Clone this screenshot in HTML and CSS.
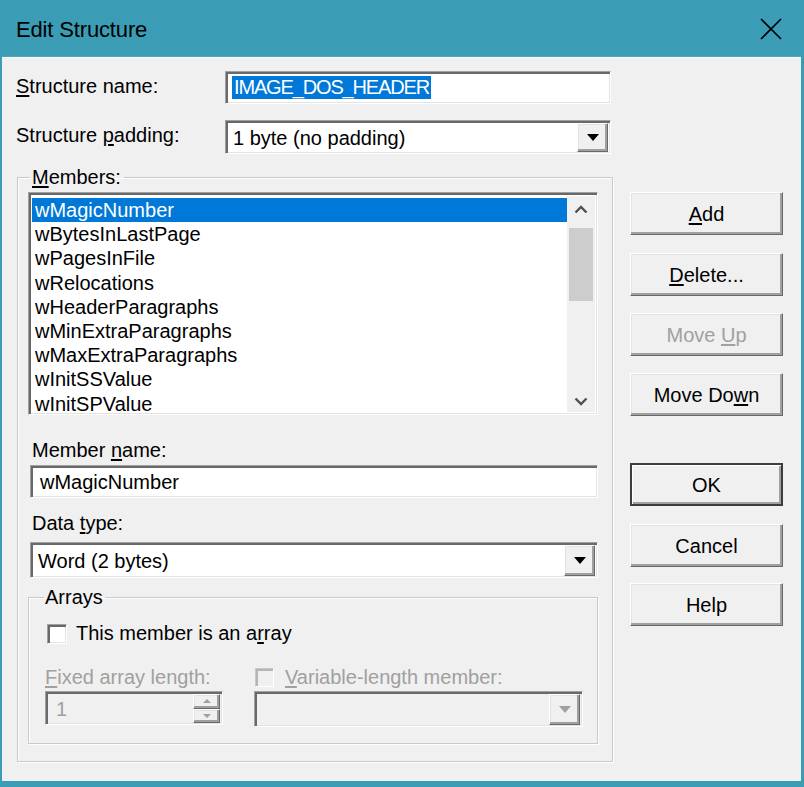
FILE: index.html
```html
<!DOCTYPE html>
<html>
<head>
<meta charset="utf-8">
<link rel="stylesheet" href="styles.css">
</head>
<body>
<div class="window">
  <div class="titlebar">
    <span class="title">Edit Structure</span>
    <svg class="close" width="22" height="22" viewBox="0 0 22 22"><path d="M1 1 L21 21 M21 1 L1 21" stroke="#000" stroke-width="1.6" fill="none"/></svg>
  </div>
  <div class="body">
    <div class="left">
      <div class="row r1">
        <span class="rowlabel"><u>S</u>tructure name:</span>
        <div class="edit sunken wide"><span class="seltext">IMAGE_DOS_HEADER</span></div>
      </div>
      <div class="row r2">
        <span class="rowlabel">Structure <u>p</u>adding:</span>
        <div class="combo sunken wide">
          <span class="combotext">1 byte (no padding)</span>
          <span class="dropbtn raised"><svg width="12" height="7" viewBox="0 0 12 7"><path d="M0 0 H12 L6 7 Z" fill="#000"/></svg></span>
        </div>
      </div>
      <fieldset class="group members">
        <legend class="legend"><u>M</u>embers:</legend>
        <div class="listbox sunken">
          <ul class="items">
            <li class="item selected">wMagicNumber</li>
            <li class="item">wBytesInLastPage</li>
            <li class="item">wPagesInFile</li>
            <li class="item">wRelocations</li>
            <li class="item">wHeaderParagraphs</li>
            <li class="item">wMinExtraParagraphs</li>
            <li class="item">wMaxExtraParagraphs</li>
            <li class="item">wInitSSValue</li>
            <li class="item">wInitSPValue</li>
          </ul>
          <div class="vscroll">
            <svg class="chev" width="14" height="9" viewBox="0 0 14 9"><path d="M1.5 7.5 L7 2 L12.5 7.5" stroke="#505050" stroke-width="2.4" fill="none"/></svg>
            <div class="track"><div class="thumb"></div></div>
            <svg class="chev" width="14" height="9" viewBox="0 0 14 9"><path d="M1.5 1.5 L7 7 L12.5 1.5" stroke="#505050" stroke-width="2.4" fill="none"/></svg>
          </div>
        </div>
        <div class="lbl l-name">Member <u>n</u>ame:</div>
        <div class="edit sunken full e-name"><span class="plaintext">wMagicNumber</span></div>
        <div class="lbl l-type">Data <u>t</u>ype:</div>
        <div class="combo sunken full c-type">
          <span class="combotext">Word (2 bytes)</span>
          <span class="dropbtn raised"><svg width="12" height="7" viewBox="0 0 12 7"><path d="M0 0 H12 L6 7 Z" fill="#000"/></svg></span>
        </div>
        <fieldset class="group arrays">
          <legend class="legend">Arrays</legend>
          <div class="checkrow">
            <span class="checkbox sunken"></span>
            <span class="checklabel">This member is an a<u>r</u>ray</span>
          </div>
          <div class="arraycols">
            <div class="acol acol-left">
              <div class="dislbl"><u>F</u>ixed array length:</div>
              <div class="spin sunken">
                <span class="spintext">1</span>
                <span class="spinbtns">
                  <span class="spinbtn raised"><svg width="8" height="4" viewBox="0 0 8 4"><path d="M0 4 H8 L4 0 Z" fill="#a0a0a0"/></svg></span>
                  <span class="spinbtn raised"><svg width="8" height="4" viewBox="0 0 8 4"><path d="M0 0 H8 L4 4 Z" fill="#a0a0a0"/></svg></span>
                </span>
              </div>
            </div>
            <div class="acol acol-right">
              <div class="dischk">
                <span class="checkbox disabled"></span>
                <span class="dislbl"><u>V</u>ariable-length member:</span>
              </div>
              <div class="combo sunken discombo">
                <span class="combotext"></span>
                <span class="dropbtn raised"><svg width="12" height="7" viewBox="0 0 12 7"><path d="M0 0 H12 L6 7 Z" fill="#a0a0a0"/></svg></span>
              </div>
            </div>
          </div>
        </fieldset>
      </fieldset>
    </div>
    <div class="right">
      <button class="btn raised b-add"><span><u>A</u>dd</span></button>
      <button class="btn raised b-del"><span><u>D</u>elete...</span></button>
      <button class="btn raised b-up disabledbtn"><span>Move <u>U</u>p</span></button>
      <button class="btn raised b-down"><span>Move Do<u>w</u>n</span></button>
      <button class="btn raised b-ok default"><span>OK</span></button>
      <button class="btn raised b-cancel"><span>Cancel</span></button>
      <button class="btn raised b-help"><span>Help</span></button>
    </div>
  </div>
</div>
</body>
</html>
```
FILE: styles.css
```css
* { box-sizing: border-box; }
html, body { margin: 0; padding: 0; }
body {
  width: 804px;
  height: 787px;
  background: #3a9db5;
  font-family: "Liberation Sans", Arial, sans-serif;
  font-size: 20px;
  color: #000;
  overflow: hidden;
}
u { text-decoration: underline; text-underline-offset: 2px; }

.window {
  width: 804px;
  height: 787px;
  background: #3a9db5;
  padding: 0 3px 6px 2px;
  display: flex;
  flex-direction: column;
}
.titlebar {
  height: 57px;
  flex: none;
  display: flex;
  align-items: center;
  justify-content: space-between;
  padding: 0 19px 0 14px;
  border-bottom: 1px solid #4aa8be;
}
.title {
  font-size: 22px;
  color: #000;
  letter-spacing: -0.15px;
  padding-top: 3px;
}
.close { display: block; margin-top: 1px; }

.body {
  flex: 1;
  background: #f0f0f0;
  display: flex;
  padding: 0 0 0 14px;
  border-top: 1px solid #f8f8f8;
}
.left {
  width: 598px;
  display: flex;
  flex-direction: column;
}
.row {
  display: flex;
  align-items: center;
}
.r1 { margin-top: 13px; height: 33px; }
.r2 { margin-top: 16px; height: 34px; }
.rowlabel { width: 209px; flex: none; margin-top: -3px; }
.wide { width: 386px; }

.sunken {
  background: #fff;
  border: 1px solid;
  border-color: #a0a0a0 #fff #fff #a0a0a0;
  box-shadow: inset 2px 2px 0 #696969, inset -1px -1px 0 #e3e3e3;
}
.raised {
  background: #f0f0f0;
  border: 1px solid;
  border-color: #fff #696969 #696969 #fff;
  box-shadow: inset -2px -2px 0 #a0a0a0, inset 1px 1px 0 #e3e3e3;
}

.edit {
  height: 33px;
  display: flex;
  align-items: center;
  padding-left: 6px;
}
.seltext {
  background: #0078d7;
  color: #fff;
  padding: 0 2px 0 2px;
  line-height: 23px;
  margin-top: 0px;
  letter-spacing: -1.15px;
}
.plaintext { padding-left: 3px; padding-top: 2px; }

.combo {
  height: 34px;
  display: flex;
  align-items: center;
  justify-content: space-between;
  padding: 2px 2px 1px 7px;
}
.combotext { padding-top: 2px; }
.dropbtn {
  width: 31px;
  height: 100%;
  display: flex;
  align-items: center;
  justify-content: center;
}
.dropbtn svg { display: block; }

.group {
  margin: 0;
  border: 1px solid #c9c9c9;
  box-shadow: 1px 1px 0 #fff, inset 1px 1px 0 #fff;
  min-width: 0;
}
.legend {
  padding: 0 3px 0 2px;
  line-height: 22px;
  margin-left: 2px;
}
.members {
  margin-top: 12px;
  margin-left: 1px;
  width: 596px;
  height: 596px;
  padding: 0 14px 0 10px;
}

.listbox {
  margin-top: 4px;
  height: 223px;
  display: flex;
  padding: 3px 2px 2px 2px;
}
.items {
  list-style: none;
  margin: 0;
  padding: 2px 0 0;
  flex: 1;
}
.item {
  height: 24.2px;
  line-height: 24px;
  padding-left: 4px;
  white-space: nowrap;
}
.item.selected {
  background: #0078d7;
  color: #fff;
  margin-left: 1px;
  padding-left: 3px;
}
.vscroll {
  width: 28px;
  flex: none;
  background: #f0f0f0;
  display: flex;
  flex-direction: column;
  align-items: center;
  padding: 9px 0 6px;
}
.chev { display: block; flex: none; }
.track {
  flex: 1;
  width: 100%;
  padding: 14px 2px 0;
}
.thumb {
  height: 73px;
  background: #cdcdcd;
}

.lbl { line-height: 22px; margin-left: 4px; }
.l-name { margin-top: 24px; }
.full { width: 568px; margin-left: 2px; }
.e-name { margin-top: 4px; }
.l-type { margin-top: 14px; }
.c-type { margin-top: 8px; height: 36px; }

.arrays {
  margin-top: 8px;
  width: 570px;
  height: 158px;
  padding: 0 14px 0 16px;
}
.arrays .legend { margin-left: -1px; padding: 0 2px 0 1px; }
.checkrow {
  display: flex;
  align-items: center;
  margin-top: 15px;
  height: 21px;
}
.checkbox {
  width: 20px;
  height: 20px;
  flex: none;
  margin-left: 2px;
}
.checklabel { margin-left: 9px; margin-top: 0px; }
.checkbox.disabled {
  background: #f0f0f0;
  border: 1px solid;
  border-color: #c8c8c8 #fff #fff #c8c8c8;
  box-shadow: inset 2px 2px 0 #b5b5b5;
}
.arraycols {
  display: flex;
  gap: 31px;
  margin-top: 22px;
}
.acol { display: flex; flex-direction: column; }
.acol-left { width: 178px; }
.acol-right { width: 329px; }
.dislbl { color: #a0a0a0; line-height: 22px; }
.dischk { display: flex; align-items: center; gap: 11px; height: 22px; }
.dischk .checkbox { margin-left: 1px; width: 19px; height: 19px; }
.spin {
  margin-top: 3px;
  height: 34px;
  background: #f0f0f0;
  display: flex;
  align-items: center;
  justify-content: space-between;
  padding: 2px 2px 1px 10px;
}
.spintext { color: #a0a0a0; padding-top: 2px; }
.spinbtns {
  width: 27px;
  height: 100%;
  display: flex;
  flex-direction: column;
}
.spinbtn {
  flex: 1;
  display: flex;
  align-items: center;
  justify-content: center;
}
.spinbtn svg { display: block; }
.discombo {
  margin-top: 3px;
  height: 36px;
  background: #f0f0f0;
}

.right {
  display: flex;
  flex-direction: column;
  margin-left: 16px;
  padding-top: 134px;
}
.btn {
  width: 153px;
  height: 43px;
  font-family: "Liberation Sans", Arial, sans-serif;
  font-size: 20px;
  color: #000;
  padding: 2px 0 0;
  margin: 0;
  display: flex;
  align-items: center;
  justify-content: center;
}
.b-del { margin-top: 18px; }
.b-up { margin-top: 17px; }
.b-down { margin-top: 17px; }
.b-ok { margin-top: 47px; }
.b-cancel { margin-top: 18px; }
.b-help { margin-top: 16px; }
.disabledbtn { color: #a0a0a0; }
.btn.default {
  border: 2px solid #3c3c3c;
  box-shadow: inset 1px 1px 0 #fff, inset -2px -2px 0 #a0a0a0;
}
```
